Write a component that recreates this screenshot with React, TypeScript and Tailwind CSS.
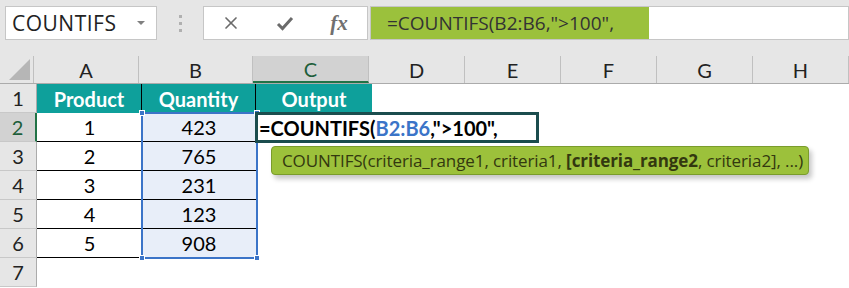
import { X } from "lucide-react";

const cols = [
  { key: "A", w: "w-[105px]" },
  { key: "B", w: "w-[114px]" },
  { key: "C", w: "w-[116px]" },
  { key: "D", w: "w-[96px]" },
  { key: "E", w: "w-[96px]" },
  { key: "F", w: "w-[96px]" },
  { key: "G", w: "w-[96px]" },
  { key: "H", w: "w-[96px]" },
];

const rows = [
  { n: 1, a: "Product", b: "Quantity", c: "Output" },
  { n: 2, a: "1", b: "423" },
  { n: 3, a: "2", b: "765" },
  { n: 4, a: "3", b: "231" },
  { n: 5, a: "4", b: "123" },
  { n: 6, a: "5", b: "908" },
  { n: 7 },
];

function Handle({ className }: { className: string }) {
  return <span className={`absolute w-[6px] h-[6px] bg-[#3b74c8] border border-white ${className}`} />;
}

function CheckMark() {
  return (
    <svg width="18" height="16" viewBox="0 0 18 16">
      <path d="M2 9 L6.5 13.5 L16 3" fill="none" stroke="#6b6b6b" strokeWidth="3" strokeLinejoin="miter" />
    </svg>
  );
}

export default function App() {
  return (
    <div className="w-[849px] h-[288px] overflow-hidden bg-white relative font-['Open_Sans',sans-serif]">
      {/* formula bar */}
      <div className="h-[56px] bg-[#e6e6e6] flex items-start pt-[6px] pl-[5px]">
        <div className="w-[152px] h-[34px] bg-white border border-[#c6c6c6] flex items-center pl-[6px] pr-[11px]">
          <span className="flex-1 text-[21px] tracking-[0.5px] text-[#222] leading-none">COUNTIFS</span>
          <span className="w-0 h-0 border-l-[4px] border-r-[4px] border-t-[4px] border-l-transparent border-r-transparent border-t-[#808080]" />
        </div>
        <div className="w-[46px] h-[34px] flex flex-col items-center justify-center gap-[4px]">
          <span className="w-[3px] h-[3px] bg-[#b0b0b0]" />
          <span className="w-[3px] h-[3px] bg-[#b0b0b0]" />
          <span className="w-[3px] h-[3px] bg-[#b0b0b0]" />
        </div>
        <div className="w-[165px] h-[34px] bg-white border border-[#c6c6c6] flex items-center">
          <span className="w-[54px] flex justify-center">
            <X className="w-[20px] h-[20px] text-[#6b6b6b]" strokeWidth={2} />
          </span>
          <span className="w-[54px] flex justify-center">
            <CheckMark />
          </span>
          <span className="w-[54px] flex justify-center font-['Liberation_Serif',serif] italic text-[21px] leading-none text-[#707070] font-bold">
            fx
          </span>
        </div>
        <div className="ml-[2px] flex-1 h-[34px] bg-white border border-[#c6c6c6] flex">
          <div className="w-[278px] bg-[#9bc13c] flex items-center pl-[16px] text-[19px] text-[#333] whitespace-nowrap">
            =COUNTIFS(B2:B6,"&gt;100",
          </div>
        </div>
      </div>

      {/* grid */}
      <div className="relative font-['Lato',sans-serif] text-[20px]">
        <div className="flex h-[28px] bg-[#e6e6e6] border-b border-[#ababab]">
          <div className="w-[37px] h-full border-r border-[#c0c0c0] flex items-end justify-end pr-[3px] pb-[3px]">
            <svg width="21" height="21" viewBox="0 0 21 21">
              <polygon points="21,0 21,21 0,21" fill="#b6b6b6" />
            </svg>
          </div>
          {cols.map((c) =>
            c.key === "C" ? (
              <div key={c.key} className={`${c.w} shrink-0 h-full bg-[#d2d2d2] border-r border-[#c0c0c0] border-b-[2px] border-b-[#217346] flex items-center justify-center text-[#1e5e3a]`}>
                {c.key}
              </div>
            ) : (
              <div key={c.key} className={`${c.w} shrink-0 h-full border-r border-[#c0c0c0] flex items-center justify-center text-[#222]`}>
                {c.key}
              </div>
            )
          )}
        </div>

        {rows.map((r) => (
          <div key={r.n} className="flex h-[29px]">
            <div
              className={`w-[37px] shrink-0 h-full flex items-center justify-center border-b border-[#c8c8c8] ${
                r.n === 2
                  ? "bg-[#d2d2d2] text-[#1e5e3a] border-r-[2px] border-r-[#217346]"
                  : "bg-[#e6e6e6] text-[#222] border-r border-r-[#ababab]"
              }`}
            >
              {r.n}
            </div>
            {r.n === 1 ? (
              <>
                <div className="w-[105px] shrink-0 bg-[#0ea09b] border-r border-black text-white font-bold flex items-center justify-center">
                  {r.a}
                </div>
                <div className="w-[114px] shrink-0 bg-[#0ea09b] border-r border-black text-white font-bold flex items-center justify-center">
                  {r.b}
                </div>
                <div className="w-[116px] shrink-0 bg-[#0ea09b] text-white font-bold flex items-center justify-center">
                  {r.c}
                </div>
              </>
            ) : r.a ? (
              <>
                <div className="w-[105px] shrink-0 border-b border-black text-black flex items-center justify-center">
                  {r.a}
                </div>
                <div className="w-[114px] shrink-0 bg-[#e8eef9] border-b border-black text-black flex items-center justify-center">
                  {r.b}
                </div>
              </>
            ) : null}
          </div>
        ))}

        {/* selected range B2:B6 */}
        <div className="absolute left-[141px] top-[56px] w-[117px] h-[147px] border-2 border-[#3b74c8] pointer-events-none">
          <Handle className="-left-[4px] -top-[4px]" />
          <Handle className="-right-[4px] -top-[4px]" />
          <Handle className="-left-[4px] -bottom-[4px]" />
          <Handle className="-right-[4px] -bottom-[4px]" />
        </div>

        {/* active cell editor */}
        <div className="absolute left-[255px] top-[56px] w-[284px] h-[31px] border-[3px] border-[#1b4d4e] bg-white flex items-center pl-[1px] font-bold text-black whitespace-nowrap">
          =COUNTIFS(<span className="text-[#3b74c8]">B2:B6</span>,"&gt;100",
        </div>

        {/* function tooltip */}
        <div className="absolute left-[271px] top-[90px] w-[538px] h-[29px] bg-[#9cc13b] border border-[#7a9c2c] rounded-[4px] shadow-[3px_4px_5px_rgba(0,0,0,0.22)] flex items-center pl-[10px] font-['Open_Sans',sans-serif] text-[17px] tracking-[-0.1px] text-[#33380f] whitespace-nowrap">
          COUNTIFS(criteria_range1, criteria1,&nbsp;<span className="font-bold">[criteria_range2</span>, criteria2], ...)
        </div>
      </div>
    </div>
  );
}
